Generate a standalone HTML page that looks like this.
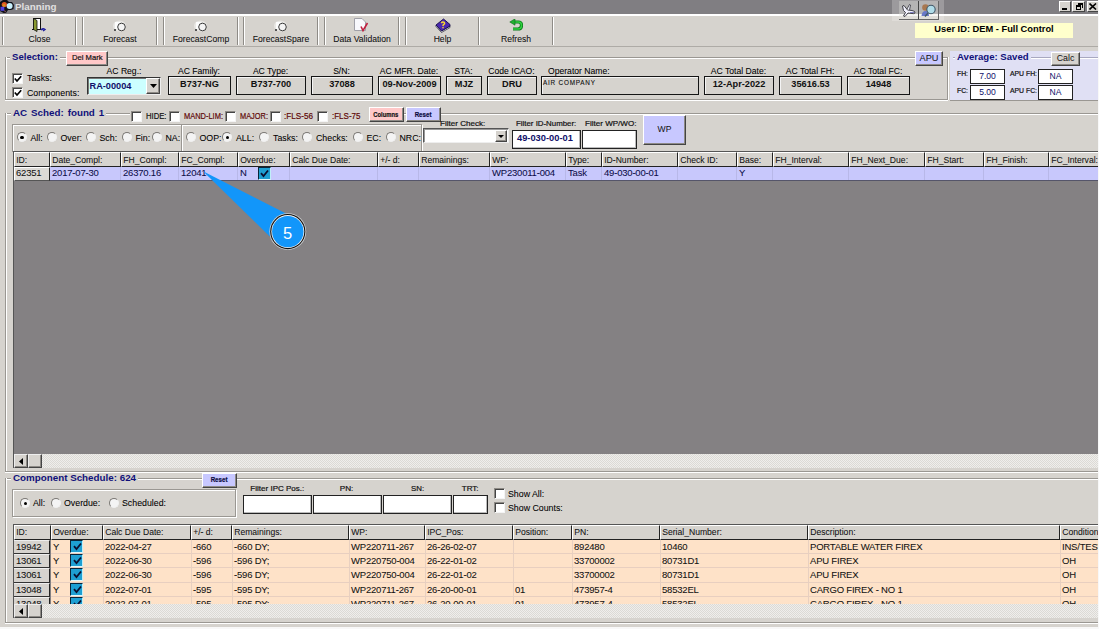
<!DOCTYPE html><html><head><meta charset="utf-8"><style>
*{box-sizing:border-box}
html,body{margin:0;padding:0}
body{width:1099px;height:629px;overflow:hidden;background:#f8f8f8;position:relative;font-family:"Liberation Sans",sans-serif;font-size:9px;color:#000}
div,span,svg{position:absolute}
#win{left:0;top:0;width:1098px;height:627px;background:#d6d3ce;overflow:hidden}
.t{white-space:nowrap;line-height:1}
.gh,.cell,.lab,.tb{-webkit-text-stroke:0.06px currentColor}
.vs{width:2px;border-left:1px solid #8e8b86;border-right:1px solid #fff;top:17px;height:28px}
.tb{top:35px;font-size:8.6px;color:#111;text-align:center;white-space:nowrap;line-height:1}
.gt{font-weight:bold;color:#10107a;font-size:9.6px;background:#d6d3ce;padding:0 2px;line-height:1;white-space:nowrap}
.box{border:1px solid #151515;box-shadow:inset 1px 1px 0 #f4f4f4;background:#d6d3ce;font-weight:bold;text-align:center;font-size:9.2px;height:19px;line-height:15px;color:#111;white-space:nowrap}
.lab{font-size:8.6px;color:#000;white-space:nowrap;line-height:1}
.btn{border-top:1px solid #fff;border-left:1px solid #fff;border-right:1px solid #444;border-bottom:1px solid #444;box-shadow:inset -1px -1px 0 #8e8b86;text-align:center;white-space:nowrap;font-size:7.6px;color:#111}
.chk{width:11px;height:11px;background:#fff;border-top:1px solid #8e8b86;border-left:1px solid #8e8b86;border-right:1px solid #f4f4f4;border-bottom:1px solid #f4f4f4;box-shadow:inset 1px 1px 0 #444}
.rad{width:10px;height:10px;border-radius:50%;background:#f4f4f4;border:1px solid;border-color:#7a7874 #f0f0f0 #f0f0f0 #7a7874}
.rad.on::after{content:"";position:absolute;left:2.5px;top:2.5px;width:3.5px;height:3.5px;border-radius:50%;background:#000}
.fld{background:#fff;border:1px solid #222;box-shadow:inset -1px -1px 0 #bbb}
.pan{border:1px solid #9a9792;box-shadow:inset 1px 1px 0 #fff,1px 1px 0 #fff}
.gl{border-top:1px solid #9a9792;border-bottom:1px solid #fff;height:2px}
.gv{border-left:1px solid #9a9792;border-right:1px solid #fff;width:2px}
.gh{background:#d6d3ce;border-top:1px solid #fff;border-left:1px solid #fff;border-right:1px solid #222;border-bottom:1px solid #222;font-size:8.6px;line-height:14px;padding-left:1.2px;white-space:nowrap;overflow:hidden;color:#111}
.cell{font-size:9.5px;letter-spacing:-0.2px;line-height:15px;padding-left:2px;white-space:nowrap;overflow:hidden}
.ck2{width:13px;height:13px;background:#1e9fd2;border:1.5px solid;border-color:#0a2438 #c0eef8 #e0f8fc #0a2438}
</style></head><body><div id="win">
<div style="left:0;top:0;width:1098px;height:14px;background:#807e82"></div>
<div style="left:0;top:14px;width:1098px;height:2px;background:#fff"></div>
<span class="t" style="left:15px;top:2px;font-weight:bold;font-size:9.8px;color:#e0e0e0">Planning</span>
<svg style="left:0;top:0" width="15" height="14" viewBox="0 0 15 14"><path d="M0 2 L3 0 L7 0 L9 2 L12 2 L14 5 L13.5 9 L11 10 L8 10 L6 13 L3.5 13 L0 11 Z" fill="#101018"/><circle cx="4.3" cy="4.5" r="2.6" fill="#e05820"/><circle cx="4" cy="5.5" r="1.4" fill="#d89020"/><circle cx="9.6" cy="6.0" r="3.0" fill="#c8f0fc"/><rect x="0.5" y="6.8" width="3.8" height="4" fill="#5040e0"/><path d="M4 10 L6 11.5 L5 12.5 Z" fill="#a06060"/></svg>
<div style="left:1059px;top:1px;width:12px;height:11px;background:#d6d3ce;border-top:1px solid #fff;border-left:1px solid #fff;border-right:1px solid #444;border-bottom:1px solid #444"></div>
<div style="left:1072px;top:1px;width:13px;height:11px;background:#d6d3ce;border-top:1px solid #fff;border-left:1px solid #fff;border-right:1px solid #444;border-bottom:1px solid #444"></div>
<div style="left:1087px;top:1px;width:12px;height:11px;background:#d6d3ce;border-top:1px solid #fff;border-left:1px solid #fff;border-right:1px solid #444;border-bottom:1px solid #444"></div>
<div style="left:1062px;top:8px;width:5px;height:2px;background:#000"></div>
<div style="left:1076px;top:5px;width:5px;height:5px;border:1px solid #000;border-top-width:2px"></div>
<div style="left:1078px;top:3px;width:5px;height:5px;border:1px solid #000;border-top-width:2px;border-left:none;border-bottom:none"></div>
<svg style="left:1089px;top:3px" width="8" height="7" viewBox="0 0 8 7"><path d="M0.5 0.5L7 6.5M7 0.5L0.5 6.5" stroke="#000" stroke-width="1.6"/></svg>
<div style="left:892px;top:0;width:52px;height:21px;background:rgba(255,255,255,0.22)"></div>
<div style="left:899px;top:1px;width:20px;height:19px;background:rgba(230,228,224,0.35);border-right:1px solid #555;border-bottom:1px solid #666"></div>
<div style="left:918px;top:1px;width:21px;height:19px;background:rgba(230,228,224,0.35);border-left:1px solid #444;border-right:1px solid #666;border-bottom:1px solid #666"></div>
<svg style="left:901px;top:3px" width="16" height="15" viewBox="0 0 16 15"><path d="M1.5 3 L3 2.5 L6.5 7 L11 7.5 Q14.5 8 14 10 Q13 11 11 10.5 L7 10 L4 13.5 L2.5 13 L4.5 9.5 L2.5 7.5 Z" fill="#f4f4ff" stroke="#303038" stroke-width="0.9"/><path d="M6 6 L8.5 1.5 L9.5 2 L8.5 7" fill="#f4f4ff" stroke="#303038" stroke-width="0.8"/><path d="M9 9.5 L13 9.5" stroke="#8080c0" stroke-width="1"/></svg>
<svg style="left:920px;top:3px" width="18" height="15" viewBox="0 0 18 15"><circle cx="5.5" cy="4.5" r="3.3" fill="#a87850"/><path d="M1.5 13 Q2 8 5.5 8 Q9 8 9 13 Z" fill="#6878c8"/><circle cx="11" cy="6.5" r="4.2" fill="#b0dce8" stroke="#405868" stroke-width="1.1"/><path d="M8 10 L5 13.5" stroke="#405868" stroke-width="1.4"/></svg>
<div class="vs" style="left:2px"></div>
<div class="vs" style="left:75px"></div>
<div class="vs" style="left:82px"></div>
<div class="vs" style="left:156px"></div>
<div class="vs" style="left:163px"></div>
<div class="vs" style="left:237px"></div>
<div class="vs" style="left:243px"></div>
<div class="vs" style="left:317px"></div>
<div class="vs" style="left:324px"></div>
<div class="vs" style="left:398px"></div>
<div class="vs" style="left:405px"></div>
<div class="vs" style="left:478px"></div>
<div class="vs" style="left:552px"></div>
<div class="tb" style="left:3px;width:73px">Close</div>
<div class="tb" style="left:83px;width:74px">Forecast</div>
<div class="tb" style="left:164px;width:74px">ForecastComp</div>
<div class="tb" style="left:244px;width:74px">ForecastSpare</div>
<div class="tb" style="left:325px;width:74px">Data Validation</div>
<div class="tb" style="left:406px;width:73px">Help</div>
<div class="tb" style="left:479px;width:74px">Refresh</div>
<svg style="left:31px;top:17px" width="16" height="16" viewBox="0 0 16 16"><rect x="2.5" y="1.5" width="7" height="11" fill="#fff" stroke="#111"/><path d="M2.5 1.5 L6 3.5 L6 14.5 L2.5 12.5 Z" fill="#8a9a30" stroke="#111" stroke-width="0.8"/><path d="M1 12.5 L3 12.5" stroke="#111"/><path d="M10 13 Q12 11 14 12.5 L12 14" stroke="#2020a0" stroke-width="1.5" fill="none"/></svg>
<svg style="left:111px;top:19px" width="18" height="15" viewBox="0 0 18 15"><ellipse cx="8.5" cy="7" rx="6.5" ry="5.5" fill="#fff" opacity="0.45"/><rect x="4" y="3" width="5" height="7" fill="#fff" opacity="0.9"/><circle cx="10.5" cy="8" r="3.8" fill="#f4f4f4" stroke="#3a3a3a" stroke-width="1"/><rect x="3" y="10" width="2" height="2" fill="#555"/></svg>
<svg style="left:192px;top:19px" width="18" height="15" viewBox="0 0 18 15"><ellipse cx="8.5" cy="7" rx="6.5" ry="5.5" fill="#fff" opacity="0.45"/><rect x="4" y="3" width="5" height="7" fill="#fff" opacity="0.9"/><circle cx="10.5" cy="8" r="3.8" fill="#f4f4f4" stroke="#3a3a3a" stroke-width="1"/><rect x="3" y="10" width="2" height="2" fill="#555"/></svg>
<svg style="left:272px;top:19px" width="18" height="15" viewBox="0 0 18 15"><ellipse cx="8.5" cy="7" rx="6.5" ry="5.5" fill="#fff" opacity="0.45"/><rect x="4" y="3" width="5" height="7" fill="#fff" opacity="0.9"/><circle cx="10.5" cy="8" r="3.8" fill="#f4f4f4" stroke="#3a3a3a" stroke-width="1"/><rect x="3" y="10" width="2" height="2" fill="#555"/></svg>
<svg style="left:353px;top:18px" width="17" height="15" viewBox="0 0 17 15"><path d="M1.5 0.5 L9 0.5 L12.5 4 L12.5 12.5 L1.5 12.5 Z" fill="#f8f8fc" stroke="#a0a0a8"/><path d="M8 8.5 L10 12.5 L14.5 5" stroke="#c02040" stroke-width="1.6" fill="none"/></svg>
<svg style="left:435px;top:18px" width="16" height="15" viewBox="0 0 16 15"><path d="M1 7 L6.5 13 L15 8 L15 9.5 L6.5 14.5 L1 8.5 Z" fill="#f0f0f4" stroke="#202030" stroke-width="0.7"/><path d="M1 7 L8.5 1 L15 6.5 L15 8 L6.5 13 Z" fill="#4a28b0" stroke="#140a48" stroke-width="0.9"/><path d="M6.3 5.2 Q7.5 3.2 9.3 4.4 Q10.3 5.6 8.2 7 L8 8.2" stroke="#f8d830" stroke-width="1.5" fill="none"/><rect x="7.3" y="9" width="1.4" height="1.3" fill="#f8d830"/></svg>
<svg style="left:509px;top:19px" width="14" height="13" viewBox="0 0 14 13"><path d="M5 3 L9.5 3 Q12.5 3 12.5 6.3 Q12.5 10 9 10 L4 10" stroke="#0a7a18" stroke-width="3.2" fill="none"/><path d="M5 3 L9.5 3 Q12.5 3 12.5 6.3 Q12.5 10 9 10 L4 10" stroke="#30d040" stroke-width="1.6" fill="none"/><path d="M0.8 3 L6 -0.2 L6 6.2 Z" fill="#20b030" stroke="#0a6a18" stroke-width="0.6"/></svg>
<div class="t" style="left:915px;top:23px;width:158px;height:15px;background:#ffffcc;font-weight:bold;font-size:9.3px;text-align:center;line-height:13px;color:#000">User ID: DEM - Full Control</div>
<div style="left:0;top:46px;width:1098px;height:1px;background:#aeaba6"></div>
<div class="gl" style="left:5px;top:57px;width:943px"></div>
<div class="gv" style="left:5px;top:57px;height:43px"></div>
<div class="gv" style="left:947px;top:57px;height:43px"></div>
<div class="gl" style="left:5px;top:99px;width:943px;border-top-color:#9a9792"></div>
<span class="gt" style="left:10px;top:52px">Selection:</span>
<div class="btn" style="left:66px;top:51px;width:42px;height:15px;background:#ffc8c8"></div>
<span class="t" style="left:71.50px;top:54.25px;font-size:7.97px;font-weight:normal;color:#111;transform-origin:0 0;transform:scaleX(0.957);-webkit-text-stroke:0.2px #111;">Del Mark</span>
<div class="chk" style="left:12px;top:73px"></div><div class="chk" style="left:12px;top:87px"></div>
<div style="left:13px;top:74px;width:10px;height:10px"><svg style="left:1px;top:1px" width="8" height="8" viewBox="0 0 8 8"><path d="M0.8 3.5 L3 6 L7.2 1.2" stroke="#000" stroke-width="1.7" fill="none"/></svg></div><div style="left:13px;top:88px;width:10px;height:10px"><svg style="left:1px;top:1px" width="8" height="8" viewBox="0 0 8 8"><path d="M0.8 3.5 L3 6 L7.2 1.2" stroke="#000" stroke-width="1.7" fill="none"/></svg></div>
<span class="lab" style="left:27px;top:74px;font-size:8.8px">Tasks:</span>
<span class="lab" style="left:27px;top:89px;font-size:8.8px">Components:</span>
<div style="left:87px;top:77px;width:74px;height:18px;background:#ccffff;border:1px solid;border-color:#333 #eee #eee #333;box-shadow:inset 1px 1px 0 #777"></div>
<span class="t" style="left:89.5px;top:81.5px;font-weight:bold;font-size:9.2px;color:#10106a">RA-00004</span>
<div class="btn" style="left:146px;top:78px;width:14px;height:16px;background:#d6d3ce"></div>
<svg style="left:150px;top:84px" width="7" height="4" viewBox="0 0 7 4"><path d="M0 0H7L3.5 4Z" fill="#000"/></svg>
<div class="lab" style="left:87px;top:67px;width:74px;text-align:center">AC Reg.:</div>
<div class="lab" style="left:168px;top:67px;width:62px;text-align:center">AC Family:</div>
<div class="box" style="left:168px;top:76px;width:63px">B737-NG</div>
<div class="lab" style="left:236px;top:67px;width:69px;text-align:center">AC Type:</div>
<div class="box" style="left:236px;top:76px;width:70px">B737-700</div>
<div class="lab" style="left:311px;top:67px;width:61px;text-align:center">S/N:</div>
<div class="box" style="left:311px;top:76px;width:62px">37088</div>
<div class="lab" style="left:378px;top:67px;width:62px;text-align:center">AC MFR. Date:</div>
<div class="box" style="left:378px;top:76px;width:63px">09-Nov-2009</div>
<div class="lab" style="left:446px;top:67px;width:35px;text-align:center">STA:</div>
<div class="box" style="left:446px;top:76px;width:36px">MJZ</div>
<div class="lab" style="left:487px;top:67px;width:49px;text-align:center">Code ICAO:</div>
<div class="box" style="left:487px;top:76px;width:50px">DRU</div>
<div class="lab" style="left:704px;top:67px;width:69px;text-align:center">AC Total Date:</div>
<div class="box" style="left:704px;top:76px;width:70px">12-Apr-2022</div>
<div class="lab" style="left:779px;top:67px;width:62px;text-align:center">AC Total FH:</div>
<div class="box" style="left:779px;top:76px;width:63px">35616.53</div>
<div class="lab" style="left:847px;top:67px;width:62px;text-align:center">AC Total FC:</div>
<div class="box" style="left:847px;top:76px;width:63px">14948</div>
<div class="lab" style="left:548px;top:67px">Operator Name:</div>
<div class="box" style="left:541px;top:76px;width:158px"></div>
<span class="t" style="left:542.80px;top:78.75px;font-size:7.97px;font-weight:normal;color:#111;transform-origin:0 0;transform:scaleX(0.797);-webkit-text-stroke:0.2px #111;-webkit-text-stroke:0.12px #000;letter-spacing:1px">AIR COMPANY</span>
<div class="btn" style="left:915px;top:51px;width:28px;height:15px;background:#c8c8ff;font-size:9.2px;line-height:12px">APU</div>
<div style="left:950px;top:51px;width:148px;height:50px;background:#e0e0f4;border-bottom:1px solid #9a9792"></div>
<div class="gl" style="left:953px;top:57px;width:145px;border-top-color:#a8a8c0"></div>
<span class="gt" style="left:955px;top:52px;background:#e0e0f4">Average: Saved</span>
<div class="btn" style="left:1051px;top:52px;width:29px;height:14px;background:#d6d3ce;font-size:8.8px;line-height:11px">Calc</div>
<span class="t" style="left:956.50px;top:70.96px;font-size:6.67px;font-weight:normal;color:#111;transform-origin:0 0;transform:scaleX(1.024);-webkit-text-stroke:0.2px #111;">FH:</span>
<span class="t" style="left:956.50px;top:87.76px;font-size:6.67px;font-weight:normal;color:#111;transform-origin:0 0;transform:scaleX(1.024);-webkit-text-stroke:0.2px #111;">FC:</span>
<span class="t" style="left:1010.00px;top:70.96px;font-size:6.67px;font-weight:normal;color:#111;transform-origin:0 0;transform:scaleX(1.027);-webkit-text-stroke:0.2px #111;">APU FH:</span>
<span class="t" style="left:1010.00px;top:87.76px;font-size:6.67px;font-weight:normal;color:#111;transform-origin:0 0;transform:scaleX(1.027);-webkit-text-stroke:0.2px #111;">APU FC:</span>
<div style="left:970px;top:69px;width:35px;height:15px;background:#fff;border:1px solid #222;text-align:center;font-size:8.6px;line-height:13px;color:#10106a">7.00</div>
<div style="left:970px;top:85px;width:35px;height:15px;background:#fff;border:1px solid #222;text-align:center;font-size:8.6px;line-height:13px;color:#10106a">5.00</div>
<div style="left:1038px;top:69px;width:35px;height:15px;background:#fff;border:1px solid #222;text-align:center;font-size:8.6px;line-height:13px;color:#10106a">NA</div>
<div style="left:1038px;top:85px;width:35px;height:15px;background:#fff;border:1px solid #222;text-align:center;font-size:8.6px;line-height:13px;color:#10106a">NA</div>
<div class="gl" style="left:5px;top:113px;width:1093px"></div>
<div class="gv" style="left:5px;top:113px;height:359px"></div>
<div class="gl" style="left:5px;top:471px;width:1093px"></div>
<span class="gt" style="left:11px;top:108px;font-size:9.8px;word-spacing:1.2px">AC Sched: found 1</span>
<div style="left:130px;top:108px;width:239px;height:16px;background:#d6d3ce"></div>
<div class="chk" style="left:131px;top:111px"></div>
<div class="chk" style="left:169px;top:111px"></div>
<div class="chk" style="left:225px;top:111px"></div>
<div class="chk" style="left:270px;top:111px"></div>
<div class="chk" style="left:317px;top:111px"></div>
<span class="t" style="left:146.00px;top:112.17px;font-size:9.13px;font-weight:normal;color:#111;transform-origin:0 0;transform:scaleX(0.842);-webkit-text-stroke:0.2px #111;">HIDE:</span>
<span class="t" style="left:184.00px;top:112.17px;font-size:9.13px;font-weight:normal;color:#600808;transform-origin:0 0;transform:scaleX(0.818);-webkit-text-stroke:0.2px #600808;">MAND-LIM:</span>
<span class="t" style="left:240.00px;top:112.17px;font-size:9.13px;font-weight:normal;color:#600808;transform-origin:0 0;transform:scaleX(0.812);-webkit-text-stroke:0.2px #600808;">MAJOR:</span>
<span class="t" style="left:284.00px;top:112.17px;font-size:9.13px;font-weight:normal;color:#600808;transform-origin:0 0;transform:scaleX(0.893);-webkit-text-stroke:0.2px #600808;">:FLS-56</span>
<span class="t" style="left:332.00px;top:112.17px;font-size:9.13px;font-weight:normal;color:#600808;transform-origin:0 0;transform:scaleX(0.878);-webkit-text-stroke:0.2px #600808;">:FLS-75</span>
<div class="btn" style="left:369px;top:107px;width:35px;height:15px;background:#ffc8c8"></div>
<span class="t" style="left:369.69px;top:110.64px;font-size:7.39px;font-weight:bold;color:#111;transform-origin:50% 0;transform:scaleX(0.791);-webkit-text-stroke:0.2px #111;">Columns</span>
<div class="btn" style="left:406px;top:107px;width:35px;height:15px;background:#c8c8ff"></div>
<span class="t" style="left:413.34px;top:110.64px;font-size:7.39px;font-weight:bold;color:#0a0a40;transform-origin:50% 0;transform:scaleX(0.835);-webkit-text-stroke:0.2px #0a0a40;">Reset</span>
<div class="pan" style="left:12px;top:124px;width:170px;height:28px"></div>
<div class="pan" style="left:181px;top:124px;width:241px;height:28px"></div>
<div class="rad on" style="left:16.5px;top:132px"></div>
<span class="lab" style="left:30.5px;top:133.6px;font-size:8.8px">All:</span>
<div class="rad" style="left:46.5px;top:132px"></div>
<span class="lab" style="left:60.5px;top:133.6px;font-size:8.8px">Over:</span>
<div class="rad" style="left:85.5px;top:132px"></div>
<span class="lab" style="left:99.5px;top:133.6px;font-size:8.8px">Sch:</span>
<div class="rad" style="left:121.5px;top:132px"></div>
<span class="lab" style="left:135.5px;top:133.6px;font-size:8.8px">Fin:</span>
<div class="rad" style="left:151.5px;top:132px"></div>
<span class="lab" style="left:165.5px;top:133.6px;font-size:8.8px">NA:</span>
<div class="rad" style="left:185.5px;top:132px"></div>
<span class="lab" style="left:199.5px;top:133.6px;font-size:8.8px">OOP:</span>
<div class="rad on" style="left:222px;top:132px"></div>
<span class="lab" style="left:236px;top:133.6px;font-size:8.8px">ALL:</span>
<div class="rad" style="left:259px;top:132px"></div>
<span class="lab" style="left:273px;top:133.6px;font-size:8.8px">Tasks:</span>
<div class="rad" style="left:302px;top:132px"></div>
<span class="lab" style="left:316px;top:133.6px;font-size:8.8px">Checks:</span>
<div class="rad" style="left:352.5px;top:132px"></div>
<span class="lab" style="left:366.5px;top:133.6px;font-size:8.8px">EC:</span>
<div class="rad" style="left:385.5px;top:132px"></div>
<span class="lab" style="left:399.5px;top:133.6px;font-size:8.8px">NRC:</span>
<span class="t" style="left:439.80px;top:120.00px;font-size:7.68px;font-weight:normal;color:#111;transform-origin:0 0;transform:scaleX(1.053);-webkit-text-stroke:0.2px #111;">Filter Check:</span>
<div style="left:423px;top:128px;width:86px;height:15px;background:#fff;border:1px solid;border-color:#555 #eee #eee #555;box-shadow:inset 1px 1px 0 #999"></div>
<div class="btn" style="left:495px;top:130px;width:12px;height:12px;background:#d6d3ce"></div>
<svg style="left:498px;top:135px" width="6" height="3" viewBox="0 0 6 3"><path d="M0 0H6L3 3Z" fill="#000"/></svg>
<span class="t" style="left:516.00px;top:120.00px;font-size:7.68px;font-weight:normal;color:#111;transform-origin:0 0;transform:scaleX(1.024);-webkit-text-stroke:0.2px #111;">Filter ID-Number:</span>
<span class="t" style="left:584.50px;top:120.00px;font-size:7.68px;font-weight:normal;color:#111;transform-origin:0 0;transform:scaleX(1.050);-webkit-text-stroke:0.2px #111;">Filter WP/WO:</span>
<div class="fld" style="left:512px;top:130px;width:69px;height:19px"></div>
<span class="t" style="left:517px;top:134px;font-size:9.3px;font-weight:bold;color:#10106a">49-030-00-01</span>
<div class="fld" style="left:582px;top:130px;width:55px;height:19px"></div>
<div class="btn" style="left:643px;top:115px;width:43px;height:30px;background:#c8c8ff;line-height:26px;font-size:8.6px">WP</div>
<div style="left:13px;top:151px;width:1085px;height:317px;background:#848183;border-left:1px solid #555;border-top:1px solid #555"></div>
<div class="gh" style="left:14px;top:152px;width:36px;height:15px">ID:</div>
<div class="gh" style="left:50px;top:152px;width:71px;height:15px">Date_Compl:</div>
<div class="gh" style="left:121px;top:152px;width:58px;height:15px">FH_Compl:</div>
<div class="gh" style="left:179px;top:152px;width:59px;height:15px">FC_Compl:</div>
<div class="gh" style="left:238px;top:152px;width:52px;height:15px">Overdue:</div>
<div class="gh" style="left:290px;top:152px;width:88px;height:15px">Calc Due Date:</div>
<div class="gh" style="left:378px;top:152px;width:41px;height:15px">+/- d:</div>
<div class="gh" style="left:419px;top:152px;width:71px;height:15px">Remainings:</div>
<div class="gh" style="left:490px;top:152px;width:76px;height:15px">WP:</div>
<div class="gh" style="left:566px;top:152px;width:36px;height:15px">Type:</div>
<div class="gh" style="left:602px;top:152px;width:76px;height:15px">ID-Number:</div>
<div class="gh" style="left:678px;top:152px;width:59px;height:15px">Check ID:</div>
<div class="gh" style="left:737px;top:152px;width:36px;height:15px">Base:</div>
<div class="gh" style="left:773px;top:152px;width:76px;height:15px">FH_Interval:</div>
<div class="gh" style="left:849px;top:152px;width:76px;height:15px">FH_Next_Due:</div>
<div class="gh" style="left:925px;top:152px;width:59px;height:15px">FH_Start:</div>
<div class="gh" style="left:984px;top:152px;width:65px;height:15px">FH_Finish:</div>
<div class="gh" style="left:1049px;top:152px;width:62px;height:15px">FC_Interval:</div>
<div style="left:50px;top:167px;width:1048px;height:14px;background:#c8c8fc;border-bottom:1px solid #55556a"></div>
<div style="left:14px;top:167px;width:36px;height:14px;background:#dcdad6;border-top:1px solid #fff;border-left:1px solid #fff;border-right:1px solid #222;border-bottom:1px solid #555"></div>
<div class="cell" style="left:14px;top:165.3px;width:36px;height:14px;color:#111">62351</div>
<div style="left:120px;top:167px;width:1px;height:13px;background:#b8b8e8"></div>
<div class="cell" style="left:50px;top:165.3px;width:71px;height:14px;color:#0c0c48">2017-07-30</div>
<div style="left:178px;top:167px;width:1px;height:13px;background:#b8b8e8"></div>
<div class="cell" style="left:121px;top:165.3px;width:58px;height:14px;color:#0c0c48">26370.16</div>
<div style="left:237px;top:167px;width:1px;height:13px;background:#b8b8e8"></div>
<div class="cell" style="left:179px;top:165.3px;width:59px;height:14px;color:#0c0c48">12041</div>
<div style="left:289px;top:167px;width:1px;height:13px;background:#b8b8e8"></div>
<div class="cell" style="left:238px;top:165.3px;width:52px;height:14px;color:#0c0c48">N</div>
<div style="left:377px;top:167px;width:1px;height:13px;background:#b8b8e8"></div>
<div style="left:418px;top:167px;width:1px;height:13px;background:#b8b8e8"></div>
<div style="left:489px;top:167px;width:1px;height:13px;background:#b8b8e8"></div>
<div style="left:565px;top:167px;width:1px;height:13px;background:#b8b8e8"></div>
<div class="cell" style="left:490px;top:165.3px;width:76px;height:14px;color:#0c0c48">WP230011-004</div>
<div style="left:601px;top:167px;width:1px;height:13px;background:#b8b8e8"></div>
<div class="cell" style="left:566px;top:165.3px;width:36px;height:14px;color:#0c0c48">Task</div>
<div style="left:677px;top:167px;width:1px;height:13px;background:#b8b8e8"></div>
<div class="cell" style="left:602px;top:165.3px;width:76px;height:14px;color:#0c0c48">49-030-00-01</div>
<div style="left:736px;top:167px;width:1px;height:13px;background:#b8b8e8"></div>
<div style="left:772px;top:167px;width:1px;height:13px;background:#b8b8e8"></div>
<div class="cell" style="left:737px;top:165.3px;width:36px;height:14px;color:#0c0c48">Y</div>
<div style="left:848px;top:167px;width:1px;height:13px;background:#b8b8e8"></div>
<div style="left:924px;top:167px;width:1px;height:13px;background:#b8b8e8"></div>
<div style="left:983px;top:167px;width:1px;height:13px;background:#b8b8e8"></div>
<div style="left:1048px;top:167px;width:1px;height:13px;background:#b8b8e8"></div>
<div style="left:1110px;top:167px;width:1px;height:13px;background:#b8b8e8"></div>
<div class="ck2" style="left:257.5px;top:167px"><svg style="left:1.5px;top:1px" width="9" height="9" viewBox="0 0 9 9"><path d="M1 4.2 L3.5 7 L8 1.5" stroke="#0a1030" stroke-width="1.8" fill="none"/></svg></div>
<div style="left:14px;top:454px;width:1084px;height:14px;background:repeating-conic-gradient(#efeeec 0 25%, #dcdad5 0 50%) 0 0/2px 2px"></div>
<div style="left:14px;top:454px;width:14px;height:14px;background:#d6d3ce;border-top:1px solid #eee;border-left:1px solid #eee;border-right:1px solid #444;border-bottom:1px solid #444;box-shadow:inset -1px -1px 0 #8e8b86"></div>
<div style="left:28px;top:454px;width:14px;height:14px;background:#d6d3ce;border-top:1px solid #eee;border-left:1px solid #eee;border-right:1px solid #444;border-bottom:1px solid #444;box-shadow:inset -1px -1px 0 #8e8b86"></div>
<svg style="left:19px;top:458px" width="4" height="7" viewBox="0 0 4 7"><path d="M4 0V7L0 3.5Z" fill="#000"/></svg>
<div class="gl" style="left:5px;top:478px;width:1093px"></div>
<div class="gv" style="left:5px;top:478px;height:146px"></div>
<div class="gl" style="left:5px;top:622px;width:1093px"></div>
<span class="gt" style="left:11px;top:473px;font-size:9.8px">Component Schedule: 624</span>
<div class="btn" style="left:202px;top:473px;width:35px;height:15px;background:#c8c8ff"></div>
<span class="t" style="left:209.24px;top:476.34px;font-size:7.39px;font-weight:bold;color:#0a0a40;transform-origin:50% 0;transform:scaleX(0.835);-webkit-text-stroke:0.2px #0a0a40;">Reset</span>
<div class="pan" style="left:12px;top:489px;width:224px;height:28px"></div>
<div class="rad on" style="left:20px;top:498px"></div>
<span class="lab" style="left:33px;top:499px;font-size:8.8px">All:</span>
<div class="rad" style="left:51px;top:498px"></div>
<span class="lab" style="left:64px;top:499px;font-size:8.8px">Overdue:</span>
<div class="rad" style="left:109px;top:498px"></div>
<span class="lab" style="left:122px;top:499px;font-size:8.8px">Scheduled:</span>
<span class="t" style="left:250.69px;top:485.18px;font-size:7.83px;font-weight:normal;color:#111;transform-origin:50% 0;transform:scaleX(1.026);-webkit-text-stroke:0.2px #111;">Filter IPC Pos.:</span>
<div class="fld" style="left:243px;top:495px;width:69px;height:19px"></div>
<span class="t" style="left:340.28px;top:485.18px;font-size:7.83px;font-weight:normal;color:#111;transform-origin:50% 0;transform:scaleX(1.042);-webkit-text-stroke:0.2px #111;">PN:</span>
<div class="fld" style="left:313px;top:495px;width:69px;height:19px"></div>
<span class="t" style="left:410.98px;top:485.18px;font-size:7.83px;font-weight:normal;color:#111;transform-origin:50% 0;transform:scaleX(1.004);-webkit-text-stroke:0.2px #111;">SN:</span>
<div class="fld" style="left:383px;top:495px;width:69px;height:19px"></div>
<span class="t" style="left:461.81px;top:485.18px;font-size:7.83px;font-weight:normal;color:#111;transform-origin:50% 0;transform:scaleX(1.026);-webkit-text-stroke:0.2px #111;">TRT:</span>
<div class="fld" style="left:453px;top:495px;width:35px;height:19px"></div>
<div class="chk" style="left:494px;top:488px"></div><div class="chk" style="left:494px;top:502px"></div>
<span class="lab" style="left:508px;top:489.5px;font-size:8.8px">Show All:</span>
<span class="lab" style="left:508px;top:503.5px;font-size:8.8px">Show Counts:</span>
<div style="left:13px;top:524px;width:1085px;height:94px;background:#848183;border-left:1px solid #555;border-top:1px solid #555"></div>
<div class="gh" style="left:14px;top:525px;width:37px;height:15px;line-height:12px">ID:</div>
<div class="gh" style="left:51px;top:525px;width:52px;height:15px;line-height:12px">Overdue:</div>
<div class="gh" style="left:103px;top:525px;width:88px;height:15px;line-height:12px">Calc Due Date:</div>
<div class="gh" style="left:191px;top:525px;width:41px;height:15px;line-height:12px">+/- d:</div>
<div class="gh" style="left:232px;top:525px;width:117px;height:15px;line-height:12px">Remainings:</div>
<div class="gh" style="left:349px;top:525px;width:76px;height:15px;line-height:12px">WP:</div>
<div class="gh" style="left:425px;top:525px;width:88px;height:15px;line-height:12px">IPC_Pos:</div>
<div class="gh" style="left:513px;top:525px;width:59px;height:15px;line-height:12px">Position:</div>
<div class="gh" style="left:572px;top:525px;width:88px;height:15px;line-height:12px">PN:</div>
<div class="gh" style="left:660px;top:525px;width:148px;height:15px;line-height:12px">Serial_Number:</div>
<div class="gh" style="left:808px;top:525px;width:252px;height:15px;line-height:12px">Description:</div>
<div class="gh" style="left:1060px;top:525px;width:61px;height:15px;line-height:12px">Condition:</div>
<div style="left:14px;top:540px;width:1084px;height:64px;overflow:hidden">
<div style="left:37px;top:0px;width:1060px;height:14px;background:#fee2c8;border-bottom:1px solid #e8cfc0"></div>
<div style="left:0;top:0px;width:36px;height:14px;background:#d6d3ce;border-top:1px solid #eee;border-right:1px solid #222;border-bottom:1px solid #333"></div>
<div class="cell" style="left:0px;top:-1px;width:37px;height:15px;color:#111">19942</div>
<div style="left:89px;top:0px;width:1px;height:14px;background:#e8d0c0"></div>
<div class="cell" style="left:37px;top:-1px;width:20px;height:15px;color:#111">Y</div>
<div class="ck2" style="left:56px;top:0px"><svg style="left:1.5px;top:1px" width="9" height="9" viewBox="0 0 9 9"><path d="M1 4.2 L3.5 7 L8 1.5" stroke="#0a1030" stroke-width="1.8" fill="none"/></svg></div>
<div style="left:177px;top:0px;width:1px;height:14px;background:#e8d0c0"></div>
<div class="cell" style="left:89px;top:-1px;width:88px;height:15px;color:#111">2022-04-27</div>
<div style="left:218px;top:0px;width:1px;height:14px;background:#e8d0c0"></div>
<div class="cell" style="left:177px;top:-1px;width:41px;height:15px;color:#111">-660</div>
<div style="left:335px;top:0px;width:1px;height:14px;background:#e8d0c0"></div>
<div class="cell" style="left:218px;top:-1px;width:117px;height:15px;color:#111">-660 DY;</div>
<div style="left:411px;top:0px;width:1px;height:14px;background:#e8d0c0"></div>
<div class="cell" style="left:335px;top:-1px;width:76px;height:15px;color:#111">WP220711-267</div>
<div style="left:499px;top:0px;width:1px;height:14px;background:#e8d0c0"></div>
<div class="cell" style="left:411px;top:-1px;width:88px;height:15px;color:#111">26-26-02-07</div>
<div style="left:558px;top:0px;width:1px;height:14px;background:#e8d0c0"></div>
<div style="left:646px;top:0px;width:1px;height:14px;background:#e8d0c0"></div>
<div class="cell" style="left:558px;top:-1px;width:88px;height:15px;color:#111">892480</div>
<div style="left:794px;top:0px;width:1px;height:14px;background:#e8d0c0"></div>
<div class="cell" style="left:646px;top:-1px;width:148px;height:15px;color:#111">10460</div>
<div style="left:1046px;top:0px;width:1px;height:14px;background:#e8d0c0"></div>
<div class="cell" style="left:794px;top:-1px;width:252px;height:15px;color:#111">PORTABLE WATER FIREX</div>
<div style="left:1107px;top:0px;width:1px;height:14px;background:#e8d0c0"></div>
<div class="cell" style="left:1046px;top:-1px;width:61px;height:15px;color:#111">INS/TEST</div>
<div style="left:37px;top:14px;width:1060px;height:14px;background:#fee2c8;border-bottom:1px solid #e8cfc0"></div>
<div style="left:0;top:14px;width:36px;height:14px;background:#d6d3ce;border-top:1px solid #eee;border-right:1px solid #222;border-bottom:1px solid #333"></div>
<div class="cell" style="left:0px;top:13px;width:37px;height:15px;color:#111">13061</div>
<div style="left:89px;top:14px;width:1px;height:14px;background:#e8d0c0"></div>
<div class="cell" style="left:37px;top:13px;width:20px;height:15px;color:#111">Y</div>
<div class="ck2" style="left:56px;top:14px"><svg style="left:1.5px;top:1px" width="9" height="9" viewBox="0 0 9 9"><path d="M1 4.2 L3.5 7 L8 1.5" stroke="#0a1030" stroke-width="1.8" fill="none"/></svg></div>
<div style="left:177px;top:14px;width:1px;height:14px;background:#e8d0c0"></div>
<div class="cell" style="left:89px;top:13px;width:88px;height:15px;color:#111">2022-06-30</div>
<div style="left:218px;top:14px;width:1px;height:14px;background:#e8d0c0"></div>
<div class="cell" style="left:177px;top:13px;width:41px;height:15px;color:#111">-596</div>
<div style="left:335px;top:14px;width:1px;height:14px;background:#e8d0c0"></div>
<div class="cell" style="left:218px;top:13px;width:117px;height:15px;color:#111">-596 DY;</div>
<div style="left:411px;top:14px;width:1px;height:14px;background:#e8d0c0"></div>
<div class="cell" style="left:335px;top:13px;width:76px;height:15px;color:#111">WP220750-004</div>
<div style="left:499px;top:14px;width:1px;height:14px;background:#e8d0c0"></div>
<div class="cell" style="left:411px;top:13px;width:88px;height:15px;color:#111">26-22-01-02</div>
<div style="left:558px;top:14px;width:1px;height:14px;background:#e8d0c0"></div>
<div style="left:646px;top:14px;width:1px;height:14px;background:#e8d0c0"></div>
<div class="cell" style="left:558px;top:13px;width:88px;height:15px;color:#111">33700002</div>
<div style="left:794px;top:14px;width:1px;height:14px;background:#e8d0c0"></div>
<div class="cell" style="left:646px;top:13px;width:148px;height:15px;color:#111">80731D1</div>
<div style="left:1046px;top:14px;width:1px;height:14px;background:#e8d0c0"></div>
<div class="cell" style="left:794px;top:13px;width:252px;height:15px;color:#111">APU FIREX</div>
<div style="left:1107px;top:14px;width:1px;height:14px;background:#e8d0c0"></div>
<div class="cell" style="left:1046px;top:13px;width:61px;height:15px;color:#111">OH</div>
<div style="left:37px;top:28px;width:1060px;height:15px;background:#fee2c8;border-bottom:1px solid #e8cfc0"></div>
<div style="left:0;top:28px;width:36px;height:15px;background:#d6d3ce;border-top:1px solid #eee;border-right:1px solid #222;border-bottom:1px solid #333"></div>
<div class="cell" style="left:0px;top:27px;width:37px;height:15px;color:#111">13061</div>
<div style="left:89px;top:28px;width:1px;height:14px;background:#e8d0c0"></div>
<div class="cell" style="left:37px;top:27px;width:20px;height:15px;color:#111">Y</div>
<div class="ck2" style="left:56px;top:28px"><svg style="left:1.5px;top:1px" width="9" height="9" viewBox="0 0 9 9"><path d="M1 4.2 L3.5 7 L8 1.5" stroke="#0a1030" stroke-width="1.8" fill="none"/></svg></div>
<div style="left:177px;top:28px;width:1px;height:14px;background:#e8d0c0"></div>
<div class="cell" style="left:89px;top:27px;width:88px;height:15px;color:#111">2022-06-30</div>
<div style="left:218px;top:28px;width:1px;height:14px;background:#e8d0c0"></div>
<div class="cell" style="left:177px;top:27px;width:41px;height:15px;color:#111">-596</div>
<div style="left:335px;top:28px;width:1px;height:14px;background:#e8d0c0"></div>
<div class="cell" style="left:218px;top:27px;width:117px;height:15px;color:#111">-596 DY;</div>
<div style="left:411px;top:28px;width:1px;height:14px;background:#e8d0c0"></div>
<div class="cell" style="left:335px;top:27px;width:76px;height:15px;color:#111">WP220750-004</div>
<div style="left:499px;top:28px;width:1px;height:14px;background:#e8d0c0"></div>
<div class="cell" style="left:411px;top:27px;width:88px;height:15px;color:#111">26-22-01-02</div>
<div style="left:558px;top:28px;width:1px;height:14px;background:#e8d0c0"></div>
<div style="left:646px;top:28px;width:1px;height:14px;background:#e8d0c0"></div>
<div class="cell" style="left:558px;top:27px;width:88px;height:15px;color:#111">33700002</div>
<div style="left:794px;top:28px;width:1px;height:14px;background:#e8d0c0"></div>
<div class="cell" style="left:646px;top:27px;width:148px;height:15px;color:#111">80731D1</div>
<div style="left:1046px;top:28px;width:1px;height:14px;background:#e8d0c0"></div>
<div class="cell" style="left:794px;top:27px;width:252px;height:15px;color:#111">APU FIREX</div>
<div style="left:1107px;top:28px;width:1px;height:14px;background:#e8d0c0"></div>
<div class="cell" style="left:1046px;top:27px;width:61px;height:15px;color:#111">OH</div>
<div style="left:37px;top:43px;width:1060px;height:14px;background:#fee2c8;border-bottom:1px solid #e8cfc0"></div>
<div style="left:0;top:43px;width:36px;height:14px;background:#d6d3ce;border-top:1px solid #eee;border-right:1px solid #222;border-bottom:1px solid #333"></div>
<div class="cell" style="left:0px;top:42px;width:37px;height:15px;color:#111">13048</div>
<div style="left:89px;top:43px;width:1px;height:14px;background:#e8d0c0"></div>
<div class="cell" style="left:37px;top:42px;width:20px;height:15px;color:#111">Y</div>
<div class="ck2" style="left:56px;top:43px"><svg style="left:1.5px;top:1px" width="9" height="9" viewBox="0 0 9 9"><path d="M1 4.2 L3.5 7 L8 1.5" stroke="#0a1030" stroke-width="1.8" fill="none"/></svg></div>
<div style="left:177px;top:43px;width:1px;height:14px;background:#e8d0c0"></div>
<div class="cell" style="left:89px;top:42px;width:88px;height:15px;color:#111">2022-07-01</div>
<div style="left:218px;top:43px;width:1px;height:14px;background:#e8d0c0"></div>
<div class="cell" style="left:177px;top:42px;width:41px;height:15px;color:#111">-595</div>
<div style="left:335px;top:43px;width:1px;height:14px;background:#e8d0c0"></div>
<div class="cell" style="left:218px;top:42px;width:117px;height:15px;color:#111">-595 DY;</div>
<div style="left:411px;top:43px;width:1px;height:14px;background:#e8d0c0"></div>
<div class="cell" style="left:335px;top:42px;width:76px;height:15px;color:#111">WP220711-267</div>
<div style="left:499px;top:43px;width:1px;height:14px;background:#e8d0c0"></div>
<div class="cell" style="left:411px;top:42px;width:88px;height:15px;color:#111">26-20-00-01</div>
<div style="left:558px;top:43px;width:1px;height:14px;background:#e8d0c0"></div>
<div class="cell" style="left:499px;top:42px;width:59px;height:15px;color:#111">01</div>
<div style="left:646px;top:43px;width:1px;height:14px;background:#e8d0c0"></div>
<div class="cell" style="left:558px;top:42px;width:88px;height:15px;color:#111">473957-4</div>
<div style="left:794px;top:43px;width:1px;height:14px;background:#e8d0c0"></div>
<div class="cell" style="left:646px;top:42px;width:148px;height:15px;color:#111">58532EL</div>
<div style="left:1046px;top:43px;width:1px;height:14px;background:#e8d0c0"></div>
<div class="cell" style="left:794px;top:42px;width:252px;height:15px;color:#111">CARGO FIREX - NO 1</div>
<div style="left:1107px;top:43px;width:1px;height:14px;background:#e8d0c0"></div>
<div class="cell" style="left:1046px;top:42px;width:61px;height:15px;color:#111">OH</div>
<div style="left:37px;top:57px;width:1060px;height:15px;background:#fee2c8;border-bottom:1px solid #e8cfc0"></div>
<div style="left:0;top:57px;width:36px;height:15px;background:#d6d3ce;border-top:1px solid #eee;border-right:1px solid #222;border-bottom:1px solid #333"></div>
<div class="cell" style="left:0px;top:56px;width:37px;height:15px;color:#111">13048</div>
<div style="left:89px;top:57px;width:1px;height:14px;background:#e8d0c0"></div>
<div class="cell" style="left:37px;top:56px;width:20px;height:15px;color:#111">Y</div>
<div class="ck2" style="left:56px;top:57px"><svg style="left:1.5px;top:1px" width="9" height="9" viewBox="0 0 9 9"><path d="M1 4.2 L3.5 7 L8 1.5" stroke="#0a1030" stroke-width="1.8" fill="none"/></svg></div>
<div style="left:177px;top:57px;width:1px;height:14px;background:#e8d0c0"></div>
<div class="cell" style="left:89px;top:56px;width:88px;height:15px;color:#111">2022-07-01</div>
<div style="left:218px;top:57px;width:1px;height:14px;background:#e8d0c0"></div>
<div class="cell" style="left:177px;top:56px;width:41px;height:15px;color:#111">-595</div>
<div style="left:335px;top:57px;width:1px;height:14px;background:#e8d0c0"></div>
<div class="cell" style="left:218px;top:56px;width:117px;height:15px;color:#111">-595 DY;</div>
<div style="left:411px;top:57px;width:1px;height:14px;background:#e8d0c0"></div>
<div class="cell" style="left:335px;top:56px;width:76px;height:15px;color:#111">WP220711-267</div>
<div style="left:499px;top:57px;width:1px;height:14px;background:#e8d0c0"></div>
<div class="cell" style="left:411px;top:56px;width:88px;height:15px;color:#111">26-20-00-01</div>
<div style="left:558px;top:57px;width:1px;height:14px;background:#e8d0c0"></div>
<div class="cell" style="left:499px;top:56px;width:59px;height:15px;color:#111">01</div>
<div style="left:646px;top:57px;width:1px;height:14px;background:#e8d0c0"></div>
<div class="cell" style="left:558px;top:56px;width:88px;height:15px;color:#111">473957-4</div>
<div style="left:794px;top:57px;width:1px;height:14px;background:#e8d0c0"></div>
<div class="cell" style="left:646px;top:56px;width:148px;height:15px;color:#111">58532EL</div>
<div style="left:1046px;top:57px;width:1px;height:14px;background:#e8d0c0"></div>
<div class="cell" style="left:794px;top:56px;width:252px;height:15px;color:#111">CARGO FIREX - NO 1</div>
<div style="left:1107px;top:57px;width:1px;height:14px;background:#e8d0c0"></div>
<div class="cell" style="left:1046px;top:56px;width:61px;height:15px;color:#111">OH</div>
</div>
<div style="left:14px;top:604px;width:1084px;height:14px;background:repeating-conic-gradient(#efeeec 0 25%, #dcdad5 0 50%) 0 0/2px 2px"></div>
<div style="left:14px;top:604px;width:14px;height:14px;background:#d6d3ce;border-top:1px solid #eee;border-left:1px solid #eee;border-right:1px solid #444;border-bottom:1px solid #444;box-shadow:inset -1px -1px 0 #8e8b86"></div>
<div style="left:28px;top:604px;width:14px;height:14px;background:#d6d3ce;border-top:1px solid #eee;border-left:1px solid #eee;border-right:1px solid #444;border-bottom:1px solid #444;box-shadow:inset -1px -1px 0 #8e8b86"></div>
<svg style="left:19px;top:608px" width="4" height="7" viewBox="0 0 4 7"><path d="M4 0V7L0 3.5Z" fill="#000"/></svg>
<svg style="left:0;top:0" width="1099" height="629" viewBox="0 0 1099 629"><path d="M203 171.3 L286.5 213.7 L269.7 236.4 Z" fill="#1296fa"/><circle cx="287.8" cy="231.6" r="18.4" fill="#d0d0d0"/><circle cx="287.8" cy="231.6" r="17.6" fill="#111"/><circle cx="287.8" cy="231.6" r="16.5" fill="#f4f4f4"/><circle cx="287.8" cy="231.6" r="15.7" fill="#1296fa"/><text x="287.6" y="238.8" text-anchor="middle" font-family="Liberation Sans" font-size="16.5" fill="#fff">5</text></svg>
</div></body></html>
